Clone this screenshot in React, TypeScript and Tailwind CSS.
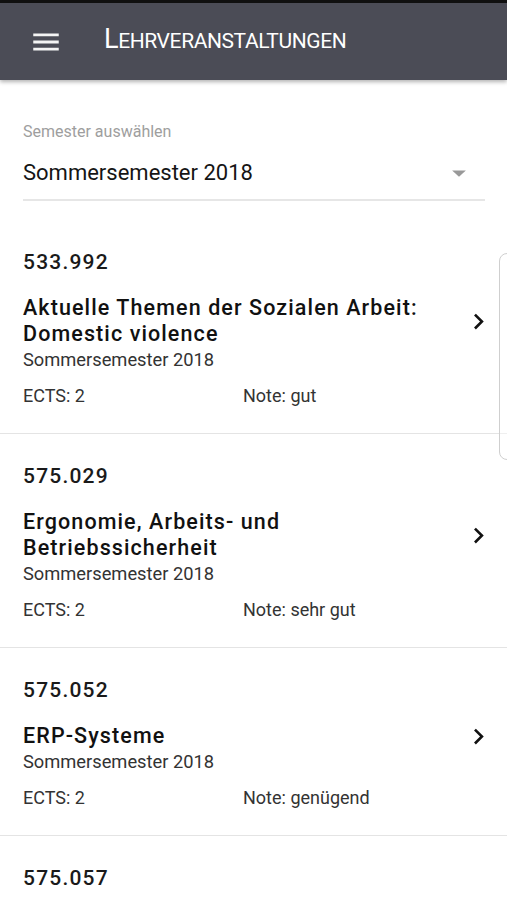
import React from "react";

type Course = {
  nr: string;
  title: string;
  semester: string;
  ects: string;
  note: string;
};

const courses: Course[] = [
  {
    nr: "533.992",
    title: "Aktuelle Themen der Sozialen Arbeit: Domestic violence",
    semester: "Sommersemester 2018",
    ects: "2",
    note: "gut",
  },
  {
    nr: "575.029",
    title: "Ergonomie, Arbeits- und Betriebssicherheit",
    semester: "Sommersemester 2018",
    ects: "2",
    note: "sehr gut",
  },
  {
    nr: "575.052",
    title: "ERP-Systeme",
    semester: "Sommersemester 2018",
    ects: "2",
    note: "genügend",
  },
  {
    nr: "575.057",
    title: "Informationsmanagement",
    semester: "Sommersemester 2018",
    ects: "3",
    note: "gut",
  },
];

const Chevron = () => (
  <svg width="21" height="19" viewBox="4 5 16 14" className="block shrink-0">
    <path
      d="M8.59 16.59L13.17 12 8.59 7.41 10 6l6 6-6 6z"
      fill="#111"
    />
  </svg>
);

const CourseItem = ({ c }: { c: Course }) => (
  <div className="border-b border-[#e4e4e4] pl-[23px] pt-[29px] pb-[25px]">
    <div className="text-[21px] font-medium tracking-[1.2px] text-[#1a1a1a] leading-[26px]">
      {c.nr}
    </div>
    <div className="mt-[20px] flex items-center pr-[18px]">
      <div className="flex-1 text-[21.5px] font-medium tracking-[1.1px] leading-[26px] text-[#111] pr-[40px]">
        {c.title}
      </div>
      <Chevron />
    </div>
    <div className="mt-px text-[18.3px] leading-[24px] text-[#333]">
      {c.semester}
    </div>
    <div className="mt-[12px] flex text-[18px] leading-[24px] text-[#333]">
      <span className="w-[220px]">ECTS: {c.ects}</span>
      <span>Note: {c.note}</span>
    </div>
  </div>
);

export default function App() {
  return (
    <div
      className="relative h-[900px] w-[507px] overflow-hidden bg-white"
      style={{ fontFamily: "Roboto, 'Liberation Sans', sans-serif" }}
    >
      <div className="h-[3px] bg-[#111]" />
      <header className="relative z-10 flex h-[77px] items-center bg-[#4b4c56] shadow-[0_2px_4px_rgba(0,0,0,0.3)]">
        <svg width="34" height="34" viewBox="0 0 24 24" className="ml-[29px]">
          <path d="M3 18h18v-2H3v2zm0-5h18v-2H3v2zm0-7v2h18V6H3z" fill="#f4f4f4" />
        </svg>
        <h1 className="ml-[41px] -mt-[4px] font-normal text-white tracking-[-0.4px] text-[21px] leading-[32px]">
          <span className="text-[27px]">L</span>EHRVERANSTALTUNGEN
        </h1>
      </header>

      <div className="px-[23px] pt-[42px] pr-[22px]">
        <div className="text-[16px] leading-[20px] text-[#9e9e9e]">Semester auswählen</div>
        <div className="mt-[16px] flex items-center border-b-2 border-[#e6e6e6] pb-[11px]">
          <span className="flex-1 text-[22px] leading-[30px] text-[#151515]">
            Sommersemester 2018
          </span>
          <svg width="30" height="30" viewBox="0 0 24 24" className="mr-[11px]">
            <path d="M6.5 10l5.5 5 5.5-5z" fill="#999" />
          </svg>
        </div>
      </div>

      <div className="mt-[19px]">
        {courses.map((c) => (
          <CourseItem key={c.nr} c={c} />
        ))}
      </div>

      <div className="absolute right-[-10px] top-[253px] h-[207px] w-[18px] rounded-[8px] border border-[#cfcfcf] bg-white/40" />
    </div>
  );
}
